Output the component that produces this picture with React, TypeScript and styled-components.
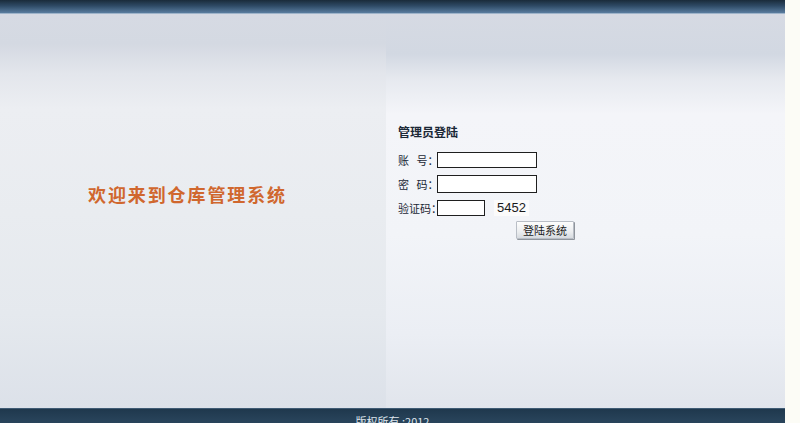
import React from "react";
import styled, { createGlobalStyle } from "styled-components";

const GlobalStyle = createGlobalStyle`
  html, body {
    margin: 0;
    padding: 0;
    overflow: hidden;
    background: #fcfcf6;
  }
  body {
    font-family: "Noto Sans CJK SC", "Liberation Sans", sans-serif;
    font-size: 12px;
    color: #1d2a36;
  }
`;

export default function App() {
  return (
    <>
      <GlobalStyle />
      <Page>
        <TopBar />
        <Main>
          <WelcomePanel>
            <Welcome>欢迎来到仓库管理系统</Welcome>
          </WelcomePanel>
          <LoginPanel>
            <LoginTitle>管理员登陆</LoginTitle>
            <Field>
              <Label>账&nbsp;&nbsp;&nbsp;号：</Label>
              <Input type="text" />
            </Field>
            <Field>
              <Label>密&nbsp;&nbsp;&nbsp;码：</Label>
              <Input type="password" $tall />
            </Field>
            <Field>
              <Label>验证码：</Label>
              <Input type="text" $short />
              <Captcha>5452</Captcha>
            </Field>
            <SubmitButton type="button">登陆系统</SubmitButton>
          </LoginPanel>
        </Main>
        <Footer>版权所有 :2012</Footer>
      </Page>
    </>
  );
}

const Page = styled.div`
  width: 785px;
  display: flex;
  flex-direction: column;
`;

const TopBar = styled.div`
  height: 13px;
  background: linear-gradient(to bottom, #1a2b3a 0%, #2e4a65 45%, #5a7d9f 100%);
  border-bottom: 1px solid #9fb4ca;
`;

const Main = styled.div`
  height: 394px;
  display: flex;
`;

const WelcomePanel = styled.div`
  width: 386px;
  padding: 166px 0 0 88px;
  box-sizing: border-box;
  background: linear-gradient(
    to bottom,
    #d6dae3 0px,
    #d4d9e2 30px,
    #e3e6ec 60px,
    #eceef2 95px,
    #e9ecf0 200px,
    #e5e9ee 300px,
    #dce1e9 394px
  );
`;

const Welcome = styled.h1`
  margin: 0;
  font-size: 18px;
  font-weight: bold;
  letter-spacing: 1.9px;
  color: #d0672e;
  line-height: 28px;
`;

const LoginPanel = styled.div`
  flex: 1;
  padding: 109px 0 0 12px;
  display: flex;
  flex-direction: column;
  background: linear-gradient(
    to bottom,
    #d6dae3 0px,
    #d2d8e2 40px,
    #e6e9ef 65px,
    #f4f5f9 100px,
    #f2f4f8 220px,
    #ebeef4 320px,
    #e1e5ec 394px
  );
`;

const LoginTitle = styled.h2`
  margin: 0 0 10px;
  font-size: 12px;
  font-weight: bold;
  line-height: 18px;
  color: #1b2836;
`;

const Field = styled.div`
  display: flex;
  align-items: center;
  height: 17px;
  margin-bottom: 7px;
`;

const Label = styled.span`
  width: 39px;
  font-size: 11px;
  white-space: nowrap;
  color: #1b2836;
`;

const Input = styled.input<{ $short?: boolean; $tall?: boolean }>`
  box-sizing: border-box;
  width: ${(p) => (p.$short ? "48px" : "100px")};
  height: ${(p) => (p.$tall ? "18px" : "16px")};
  margin: 0;
  padding: 0 2px;
  border: 1px solid #1f1f1f;
  background: #fff;
  font-size: 12px;
`;

const Captcha = styled.span`
  margin-left: 9px;
  padding: 0 3px;
  background: #fbfbfb;
  font-family: "Liberation Sans", Arial, sans-serif;
  font-size: 13px;
  line-height: 16px;
  color: #1a1a1a;
`;

const SubmitButton = styled.button`
  align-self: flex-start;
  margin: -2px 0 0 118px;
  width: 58px;
  height: 18px;
  padding: 0;
  font-family: "Noto Sans CJK SC", sans-serif;
  font-size: 11px;
  color: #1b1b1b;
  border: 1px solid #b9bec6;
  border-radius: 1px;
  background: linear-gradient(to bottom, #fdfdfd 0%, #eceef0 60%, #d7dbe0 100%);
  box-shadow: 1px 1px 0 #8f959c;
`;

const Footer = styled.div`
  height: 30px;
  background: linear-gradient(to bottom, #1f384d 0%, #28435a 40%, #2a465d 100%);
  border-top: 1px solid #3f5b74;
  color: #dfe6ee;
  font-size: 11px;
  text-align: center;
  padding-top: 4px;
  box-sizing: border-box;
`;
